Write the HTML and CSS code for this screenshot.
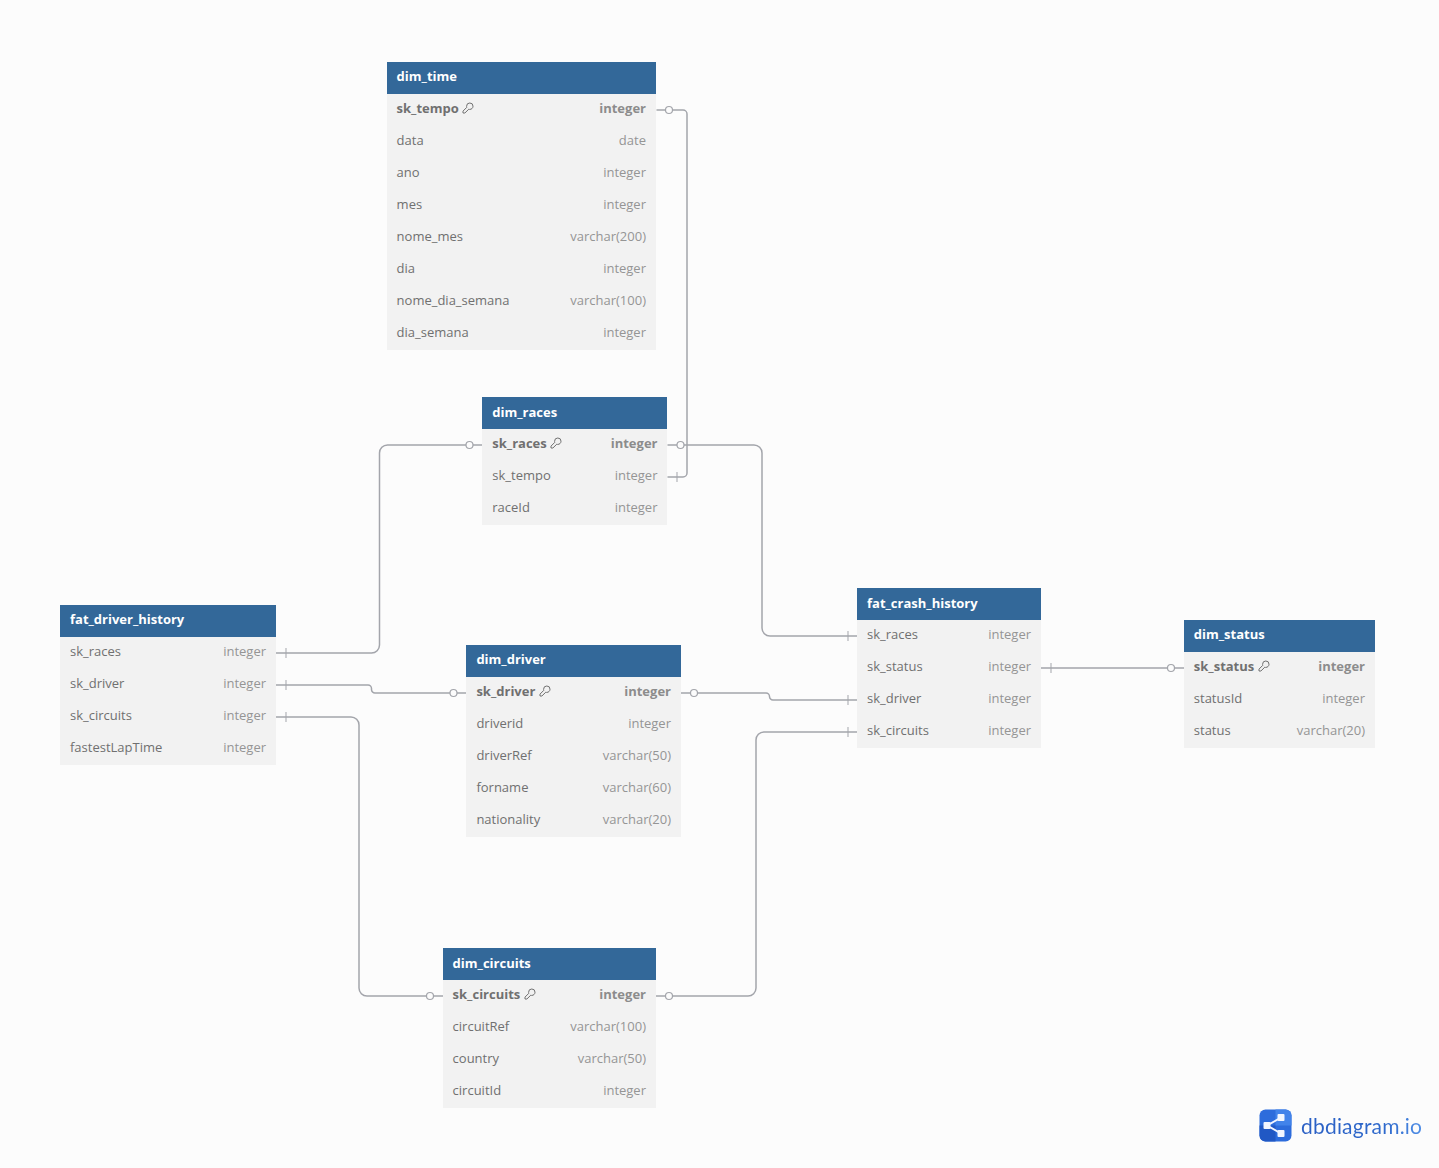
FILE: index.html
```html
<!DOCTYPE html>
<html lang="en">
<head>
<meta charset="utf-8">
<title>dbdiagram.io</title>
<link rel="stylesheet" href="styles.css">
</head>
<body>
<main class="canvas">
<svg class="links" width="1439" height="1168" viewBox="0 0 1439 1168" fill="none">
  <defs>
    <symbol id="key" viewBox="0 0 12 12"><path d="M7.800 1a3.200 3.200 0 0 1 3.200 3.200c0 1.800-1.400 3.200-3.200 3.200-.4 0-.7 0-1-.2L2.900 11H1v-1.900l3.800-3.800c-.2-.3-.2-.7-.2-1.100A3.200 3.200 0 0 1 7.800 1z" fill="none" stroke="#707070" stroke-width="1" stroke-linejoin="round"/></symbol>
  </defs>
  <g class="wire">
    <path d="M656.500 110H683a4 4 0 0 1 4 4V473a4 4 0 0 1-4 4H667.500"/>
    <path d="M482 445H387.500a8 8 0 0 0-8 8V645a8 8 0 0 1-8 8H276"/>
    <path d="M667.500 445H754a8 8 0 0 1 8 8V628a8 8 0 0 0 8 8H857"/>
    <path d="M276 685H368a3.500 3.500 0 0 1 3.500 3.500V689.500a3.500 3.500 0 0 0 3.500 3.500H466"/>
    <path d="M681 693H766a3.500 3.500 0 0 1 3.500 3.500V696.500a3.500 3.500 0 0 0 3.500 3.500H857"/>
    <path d="M276 717H351a8 8 0 0 1 8 8V988a8 8 0 0 0 8 8H443"/>
    <path d="M656 996H748a8 8 0 0 0 8-8V740a8 8 0 0 1 8-8H857"/>
    <path d="M1041 668H1184"/>
  </g>
  <g class="ticks">
    <path d="M677 472V482M286 648V658M286 680V690M286 712V722M848 631V641M848 695V705M848 727V737M1051 663V673"/>
  </g>
  <g class="rings">
    <circle cx="669" cy="110" r="3.500"/>
    <circle cx="469.500" cy="445" r="3.500"/>
    <circle cx="680.500" cy="445" r="3.500"/>
    <circle cx="453.500" cy="693" r="3.500"/>
    <circle cx="694" cy="693" r="3.500"/>
    <circle cx="430" cy="996" r="3.500"/>
    <circle cx="669" cy="996" r="3.500"/>
    <circle cx="1171" cy="668" r="3.500"/>
  </g>
</svg>

<section class="table t-time">
  <h2 class="head">dim_time</h2>
  <div class="row pk"><span class="name">sk_tempo <svg class="key"><use href="#key"/></svg></span><span class="type">integer</span></div>
  <div class="row"><span class="name">data</span><span class="type">date</span></div>
  <div class="row"><span class="name">ano</span><span class="type">integer</span></div>
  <div class="row"><span class="name">mes</span><span class="type">integer</span></div>
  <div class="row"><span class="name">nome_mes</span><span class="type">varchar(200)</span></div>
  <div class="row"><span class="name">dia</span><span class="type">integer</span></div>
  <div class="row"><span class="name">nome_dia_semana</span><span class="type">varchar(100)</span></div>
  <div class="row"><span class="name">dia_semana</span><span class="type">integer</span></div>
</section>

<section class="table t-races">
  <h2 class="head">dim_races</h2>
  <div class="row pk"><span class="name">sk_races <svg class="key"><use href="#key"/></svg></span><span class="type">integer</span></div>
  <div class="row"><span class="name">sk_tempo</span><span class="type">integer</span></div>
  <div class="row"><span class="name">raceId</span><span class="type">integer</span></div>
</section>

<section class="table t-history">
  <h2 class="head">fat_driver_history</h2>
  <div class="row"><span class="name">sk_races</span><span class="type">integer</span></div>
  <div class="row"><span class="name">sk_driver</span><span class="type">integer</span></div>
  <div class="row"><span class="name">sk_circuits</span><span class="type">integer</span></div>
  <div class="row"><span class="name">fastestLapTime</span><span class="type">integer</span></div>
</section>

<section class="table t-driver">
  <h2 class="head">dim_driver</h2>
  <div class="row pk"><span class="name">sk_driver <svg class="key"><use href="#key"/></svg></span><span class="type">integer</span></div>
  <div class="row"><span class="name">driverid</span><span class="type">integer</span></div>
  <div class="row"><span class="name">driverRef</span><span class="type">varchar(50)</span></div>
  <div class="row"><span class="name">forname</span><span class="type">varchar(60)</span></div>
  <div class="row"><span class="name">nationality</span><span class="type">varchar(20)</span></div>
</section>

<section class="table t-circuits">
  <h2 class="head">dim_circuits</h2>
  <div class="row pk"><span class="name">sk_circuits <svg class="key"><use href="#key"/></svg></span><span class="type">integer</span></div>
  <div class="row"><span class="name">circuitRef</span><span class="type">varchar(100)</span></div>
  <div class="row"><span class="name">country</span><span class="type">varchar(50)</span></div>
  <div class="row"><span class="name">circuitId</span><span class="type">integer</span></div>
</section>

<section class="table t-crash">
  <h2 class="head">fat_crash_history</h2>
  <div class="row"><span class="name">sk_races</span><span class="type">integer</span></div>
  <div class="row"><span class="name">sk_status</span><span class="type">integer</span></div>
  <div class="row"><span class="name">sk_driver</span><span class="type">integer</span></div>
  <div class="row"><span class="name">sk_circuits</span><span class="type">integer</span></div>
</section>

<section class="table t-status">
  <h2 class="head">dim_status</h2>
  <div class="row pk"><span class="name">sk_status <svg class="key"><use href="#key"/></svg></span><span class="type">integer</span></div>
  <div class="row"><span class="name">statusId</span><span class="type">integer</span></div>
  <div class="row"><span class="name">status</span><span class="type">varchar(20)</span></div>
</section>

<div class="brand">
  <svg class="brand-mark" width="33" height="33" viewBox="0 0 33 33">
    <rect x="0.500" y="0.500" width="32" height="32" rx="6" fill="#2d6cdc"/>
    <path d="M0.500 16.500H16.500V32.500H6.500a6 6 0 0 1-6-6z" fill="#2158c4"/>
    <path d="M16.500 0.500H26.500a6 6 0 0 1 6 6V16.500H16.500z" fill="#4283ea"/>
    <path d="M8 16.500L22 8.500M8 16.500L22 24.500" stroke="#f2f6ff" stroke-width="2"/>
    <rect x="4.500" y="13" width="7" height="7" rx="1" fill="#f2f6ff"/>
    <rect x="18.500" y="5" width="7" height="7" rx="1" fill="#f2f6ff"/>
    <rect x="18.500" y="21" width="7" height="7" rx="1" fill="#f2f6ff"/>
  </svg>
  <span class="brand-name">dbdiagram.io</span>
</div>
</main>
</body>
</html>
```
FILE: styles.css
```css
* { box-sizing: border-box; }
html, body { margin: 0; padding: 0; }
body {
  background: #fcfcfc;
  font-family: "Open Sans", "Noto Sans", sans-serif;
  overflow: hidden;
}
.canvas {
  position: relative;
  width: 1439px;
  height: 1168px;
  overflow: hidden;
}
.links { position: absolute; left: 0; top: 0; }
.wire path { stroke: #a3a5ab; stroke-width: 1.5; }
.ticks path { stroke: #a3a5ab; stroke-width: 1; }
.rings circle { fill: #fcfcfc; stroke: #a3a5ab; stroke-width: 1.2; }

.table {
  position: absolute;
  background: #f2f2f2;
  font-size: 13px;
  line-height: 32px;
  color: #7b7b7b;
}
.head {
  margin: 0;
  height: 32px;
  padding: 0 10px;
  background: #336899;
  color: #fff;
  font-size: 13px;
  font-weight: 700;
  line-height: 29px;
}
.row {
  display: flex;
  justify-content: space-between;
  height: 32px;
  padding: 0 10px;
  line-height: 29px;
}
.name { color: #707070; white-space: nowrap; }
.type { color: #959595; white-space: nowrap; }
.pk .name { font-weight: 700; }
.pk .type { font-weight: 700; color: #8c8c8c; }
.key { width: 12px; height: 12px; vertical-align: -1px; }

.t-time { left: 386.6px; top: 62px; width: 269.4px; }
.t-races { left: 482.3px; top: 397px; width: 185.2px; }
.t-history { left: 60px; top: 605px; width: 216px; }
.t-driver { left: 466.4px; top: 645px; width: 214.6px; }
.t-circuits { left: 442.6px; top: 948px; width: 213.4px; }
.t-crash { left: 857px; top: 588px; width: 184px; }
.t-status { left: 1183.8px; top: 620px; width: 191.2px; }
.t-races .head, .t-circuits .head, .t-crash .head { line-height: 31px; }

.brand {
  position: absolute;
  left: 1259px;
  top: 1109px;
  display: flex;
  align-items: center;
  gap: 9px;
}
.brand-name {
  font-family: "Lato", "Inter", sans-serif;
  font-size: 21px;
  letter-spacing: 0.2px;
  background: linear-gradient(90deg, #2a5fc4, #2e69cc 70%, #4f8ee6);
  -webkit-background-clip: text;
  background-clip: text;
  color: transparent;
}
```
